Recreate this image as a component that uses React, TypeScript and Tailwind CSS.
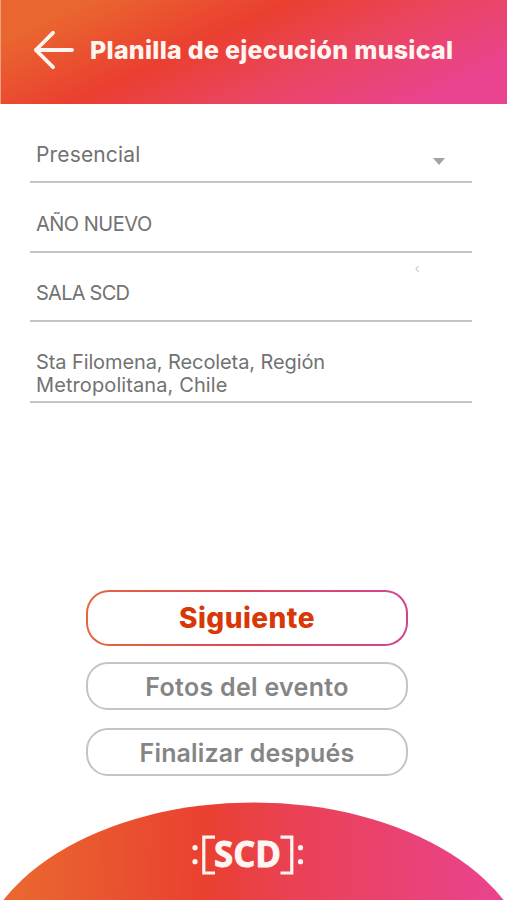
import React from 'react';

const Header: React.FC = () => (
  <header className="flex h-[104px] items-center border-l border-[#f0a080] bg-[linear-gradient(155deg,#ea662f_12%,#ea3f30_40%,#ea4560_62%,#ea438f_88%)] pb-1 pl-8">
    <button aria-label="Volver" className="shrink-0">
      <svg
        className="h-10 w-[42px]"
        viewBox="0 0 42 40"
        fill="none"
        stroke="#fff5f0"
        strokeWidth="3.8"
        strokeLinecap="round"
        strokeLinejoin="round"
      >
        <path d="M20 2.8 2.8 20 20 37.2M2.8 20H39" />
      </svg>
    </button>
    <h1 className="mt-[2px] ml-[15px] text-[25px] font-extrabold tracking-[0.26px] whitespace-nowrap text-[#fff5f0]">
      Planilla de ejecución musical
    </h1>
  </header>
);

const Footer: React.FC = () => (
  <footer className="h-[98px]">
    <svg className="block h-[98px] w-full" viewBox="0 0 507 98">
      <defs>
        <linearGradient id="footerFill" gradientUnits="userSpaceOnUse" x1="10" y1="60" x2="500" y2="70">
          <stop offset="0.02" stopColor="#ea662f" />
          <stop offset="0.4" stopColor="#ea4030" />
          <stop offset="0.55" stopColor="#ea4150" />
          <stop offset="1" stopColor="#ea438f" />
        </linearGradient>
      </defs>
      <ellipse cx="253.5" cy="173.5" rx="278" ry="173" fill="url(#footerFill)" />
      <g fill="none" stroke="#fff5f2" strokeWidth="3.2">
        <path d="M215 35.2H203.8V71H215" />
        <path d="M280.5 35.2H291.8V71H280.5" />
      </g>
      <g fill="#fff5f2">
        <circle cx="195" cy="45.7" r="2.6" />
        <circle cx="195" cy="59.7" r="2.6" />
        <circle cx="300.5" cy="45.7" r="2.6" />
        <circle cx="300.5" cy="59.7" r="2.6" />
      </g>
      <text
        x="214"
        y="65.3"
        textLength="67"
        lengthAdjust="spacingAndGlyphs"
        className="fill-[#fff5f2] stroke-[#fff5f2] font-['Open_Sans',sans-serif] text-[36px] font-bold"
        strokeWidth="0.9"
      >
        SCD
      </text>
    </svg>
  </footer>
);

export default function App() {
  return (
    <div className="flex h-[900px] w-full flex-col overflow-hidden bg-white font-[Inter,sans-serif]">
      <Header />

      <main className="flex flex-1 flex-col">
        <div className="mr-[35px] ml-[30px] text-[20px] leading-[22.5px] text-[#727272]">
          <div className="flex h-[79px] items-end justify-between border-b-2 border-[#c4c4c4] pr-[27px] pb-[15px] pl-[6px]">
            <span className="text-[21px] tracking-[0.15px]">Presencial</span>
            <svg className="mb-px h-[7px] w-3" viewBox="0 0 12 7">
              <path d="M0 0H12L6 7Z" fill="#a3a3a3" />
            </svg>
          </div>
          <div className="flex h-[70px] items-end border-b-2 border-[#c4c4c4] pb-4 pl-[6px]">
            <span className="tracking-[-0.5px]">AÑO NUEVO</span>
          </div>
          <div className="flex h-[69px] items-end justify-between border-b-2 border-[#c4c4c4] pr-[53px] pb-4 pl-[6px]">
            <span className="tracking-[-0.75px]">SALA SCD</span>
            <svg className="mb-[31px] h-2 w-1" viewBox="0 0 4 8" fill="none" stroke="#b5b5b5">
              <path d="M3.5 1 .8 4l2.7 3" />
            </svg>
          </div>
          <div className="flex h-[81px] flex-col justify-end border-b-2 border-[#c4c4c4] pb-[5px] pl-[6px]">
            <span className="tracking-[-0.1px]">Sta Filomena, Recoleta, Región</span>
            <span className="tracking-[0.1px]">Metropolitana, Chile</span>
          </div>
        </div>

        <div className="mt-auto mr-[99px] mb-[26px] ml-[86px] flex flex-col">
          <button className="h-14 rounded-[23px] bg-[linear-gradient(90deg,#e4683e,#df4858_45%,#d14590)] p-[2px]">
            <span className="flex h-full items-center justify-center rounded-[21px] bg-white text-[28px] font-extrabold tracking-[0.45px] text-[#d83808]">
              Siguiente
            </span>
          </button>
          <button className="mt-4 h-12 rounded-[22px] border-2 border-[#c4c4c4] pt-[2px] text-[25px] leading-none font-semibold tracking-[0.3px] text-[#858585]">
            Fotos del evento
          </button>
          <button className="mt-[18px] h-12 rounded-[22px] border-2 border-[#c4c4c4] pt-[2px] text-[25px] leading-none font-semibold tracking-[0.15px] text-[#858585]">
            Finalizar después
          </button>
        </div>
      </main>

      <Footer />
    </div>
  );
}
